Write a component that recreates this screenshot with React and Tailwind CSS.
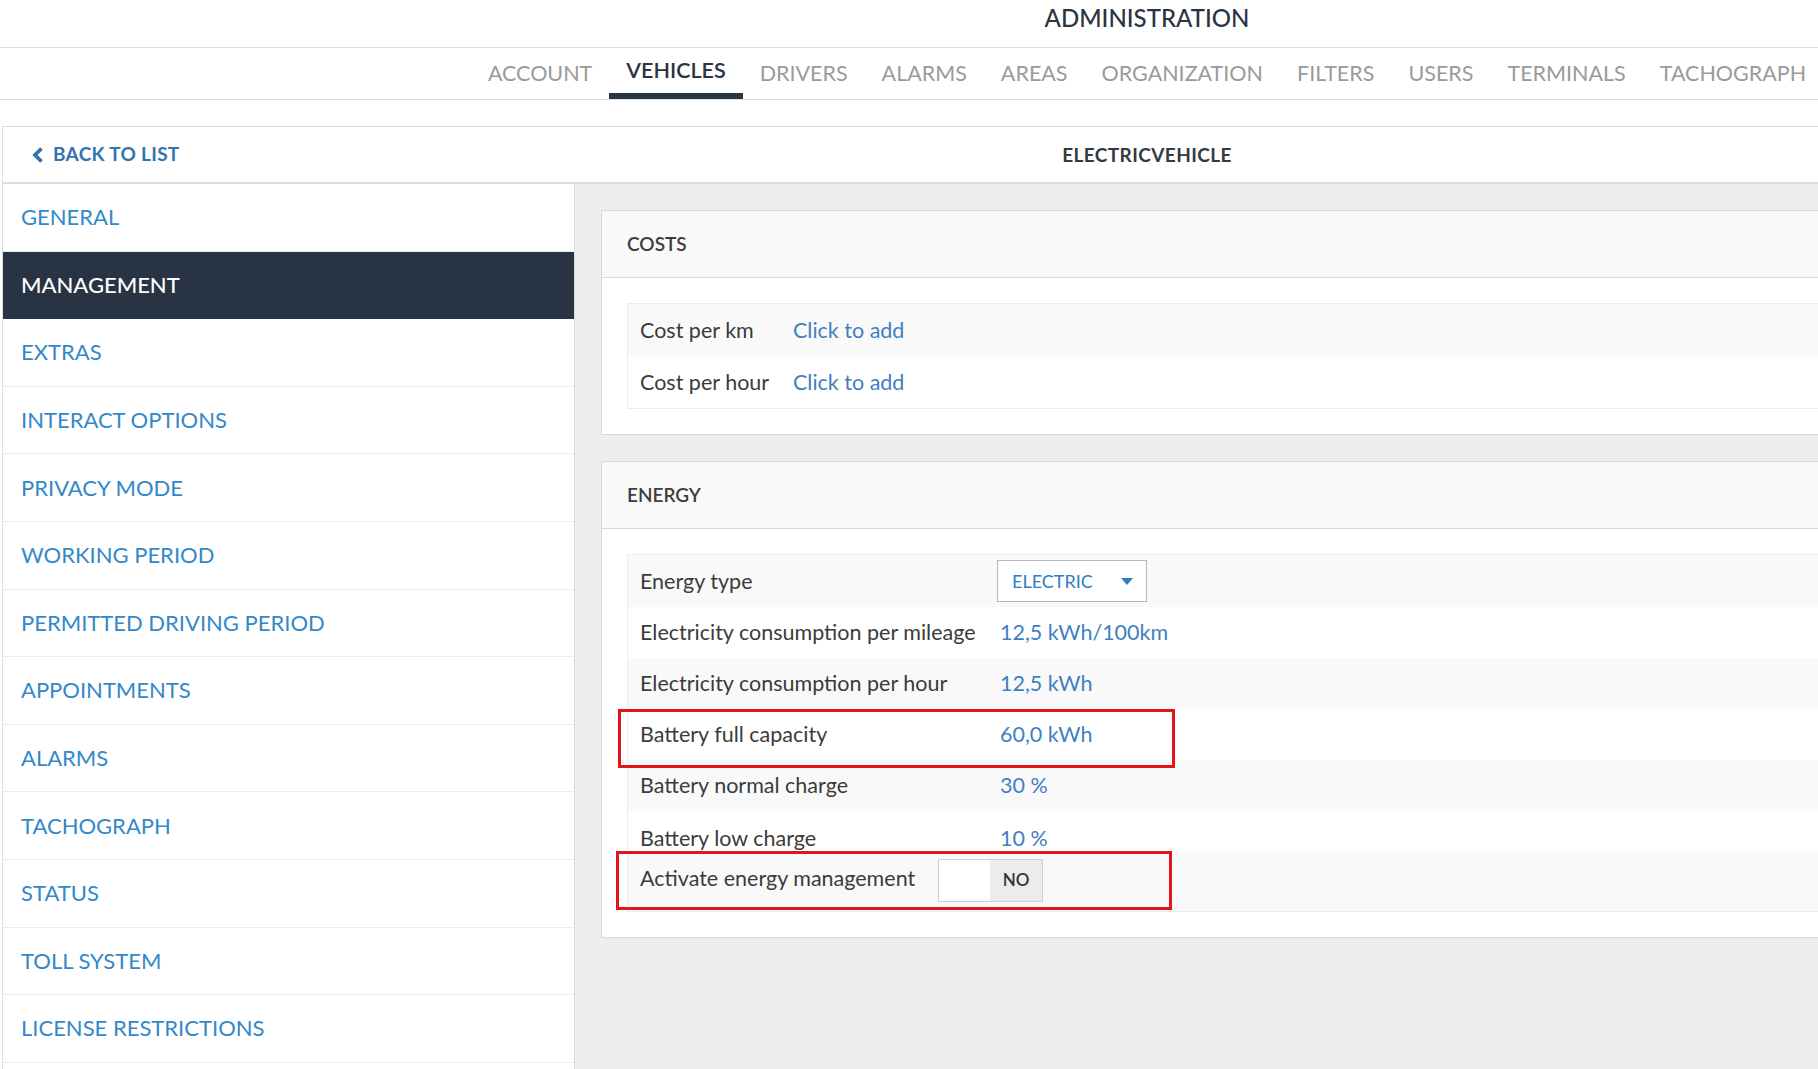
import React from "react";

const tabs = ["ACCOUNT","VEHICLES","DRIVERS","ALARMS","AREAS","ORGANIZATION","FILTERS","USERS","TERMINALS","TACHOGRAPH"];
const side = ["GENERAL","MANAGEMENT","EXTRAS","INTERACT OPTIONS","PRIVACY MODE","WORKING PERIOD","PERMITTED DRIVING PERIOD","APPOINTMENTS","ALARMS","TACHOGRAPH","STATUS","TOLL SYSTEM","LICENSE RESTRICTIONS",""];

function Card({ title, children }) {
  return (
    <div className="bg-white border border-[#d9d9d9]">
      <div className="h-[67px] bg-[#f9f9f9] border-b border-[#d9d9d9] flex items-center pl-[25px]">
        <span className="text-[19px] font-semibold text-[#3d3d3d]">{title}</span>
      </div>
      <div className="p-[25px]">{children}</div>
    </div>
  );
}

function Row({ label, labelW, h, bg, children, align = "items-center", extra = "" }) {
  return (
    <div className={`flex ${align} ${bg} ${extra}`} style={{ height: h }}>
      <div className="shrink-0 pl-[12px] whitespace-nowrap text-[21.5px] text-[#3b3b3b]" style={{ width: labelW }}>{label}</div>
      <div className="pl-[13px] whitespace-nowrap text-[21.5px] text-[#3f80c2] flex items-center">{children}</div>
    </div>
  );
}

export default function App() {
  return (
    <div className="w-screen h-screen overflow-hidden bg-white" style={{ fontFamily: "Lato, 'Open Sans', sans-serif" }}>
      <div className="w-[2294px]">
        <div className="h-[47px] flex justify-center pt-[3px]">
          <span className="text-[24px] leading-[30px] font-medium text-[#2b3440]">ADMINISTRATION</span>
        </div>
        <div className="h-[53px] border-t border-b border-[#dedede] flex justify-center">
          {tabs.map((t) =>
            t === "VEHICLES" ? (
              <div key={t} className="relative px-[17px] flex items-center">
                <span className="text-[21.5px] font-semibold text-[#2b3440] pb-[7px]">{t}</span>
                <div className="absolute left-0 right-0 bottom-0 h-[6px] bg-[#2a3542]" />
              </div>
            ) : (
              <div key={t} className="px-[17px] flex items-center">
                <span className="text-[21.5px] text-[#9a9a9a]">{t}</span>
              </div>
            )
          )}
        </div>
        <div className="h-[26px]" />
        <div className="ml-[2px] mr-[2px] border border-[#dedede] bg-[#eeeeee]">
          <div className="h-[57px] bg-white border-b-[2px] border-[#dedede] relative flex items-center justify-center">
            <div className="absolute left-[29px] top-0 bottom-0 flex items-center gap-[9px] text-[#3374ad]">
              <svg width="12" height="16" viewBox="0 0 12 16"><path d="M9.5 1.5 L3 8 L9.5 14.5" fill="none" stroke="currentColor" strokeWidth="3.8" strokeLinejoin="miter" /></svg>
              <span className="text-[19px] font-bold tracking-[0.3px]">BACK TO LIST</span>
            </div>
            <span className="text-[19px] font-bold tracking-[0.4px] text-[#333a42] pt-[2px]">ELECTRICVEHICLE</span>
          </div>
          <div className="flex">
            <div className="w-[572px] shrink-0 bg-white border-r border-[#dcdcdc]">
              {side.map((s, i) =>
                s === "MANAGEMENT" ? (
                  <div key={i} className="h-[67.6px] bg-[#283343] flex items-center pl-[18px] pb-[1px]">
                    <span className="text-[22px] text-white font-medium">{s}</span>
                  </div>
                ) : (
                  <div key={i} className="h-[67.6px] border-b border-[#ececec] flex items-center pl-[18px] pb-[1px]">
                    <span className="text-[22px] text-[#3488c9]">{s}</span>
                  </div>
                )
              )}
            </div>
            <div className="flex-1 p-[26px] flex flex-col gap-[26px] bg-[#eeeeee]">
              <Card title="COSTS">
                <div className="border border-[#ececec]">
                  <Row label="Cost per km" labelW={152} h={52} bg="bg-[#f9f9f9]">Click to add</Row>
                  <Row label="Cost per hour" labelW={152} h={52} bg="bg-white">Click to add</Row>
                </div>
              </Card>
              <Card title="ENERGY">
                <div className="relative border border-[#ececec]">
                  <Row label="Energy type" labelW={359} h={52} bg="bg-[#f9f9f9]">
                    <div className="-ml-[3px] w-[150px] h-[42px] border-[1.5px] border-[#b8b8b8] bg-white flex items-center justify-between pl-[14px] pr-[13px]">
                      <span className="text-[18px] text-[#2f7dc0]">ELECTRIC</span>
                      <svg width="12" height="7" viewBox="0 0 12 7"><path d="M0 0 H12 L6 7 Z" fill="#2f7dc0" /></svg>
                    </div>
                  </Row>
                  <Row label="Electricity consumption per mileage" labelW={359} h={51} bg="bg-white">12,5 kWh/100km</Row>
                  <Row label="Electricity consumption per hour" labelW={359} h={51} bg="bg-[#f9f9f9]">12,5 kWh</Row>
                  <Row label="Battery full capacity" labelW={359} h={51} bg="bg-white">60,0 kWh</Row>
                  <Row label="Battery normal charge" labelW={359} h={51} bg="bg-[#f9f9f9]">30 %</Row>
                  <Row label="Battery low charge" labelW={359} h={40} bg="bg-white" align="items-start" extra="pt-[11px]">10 %</Row>
                  <div className="flex items-center h-[60px] bg-[#f9f9f9]">
                    <div className="shrink-0 pl-[12px] w-[310px] whitespace-nowrap text-[21.5px] text-[#3b3b3b] pb-[6px]">Activate energy management</div>
                    <div className="flex h-[43px] border border-[#cfcfcf] mb-[2px]">
                      <div className="w-[51px] bg-white" />
                      <div className="w-[52px] bg-[#ececec] flex items-center justify-center text-[17px] font-semibold text-[#333]">NO</div>
                    </div>
                  </div>
                  <div className="absolute left-[-10px] top-[154px] w-[557px] h-[59px] border-[3px] border-[#e3141b] pointer-events-none" />
                  <div className="absolute left-[-12px] top-[296px] w-[556px] h-[59px] border-[3px] border-[#e3141b] pointer-events-none" />
                </div>
              </Card>
            </div>
          </div>
        </div>
      </div>
    </div>
  );
}
